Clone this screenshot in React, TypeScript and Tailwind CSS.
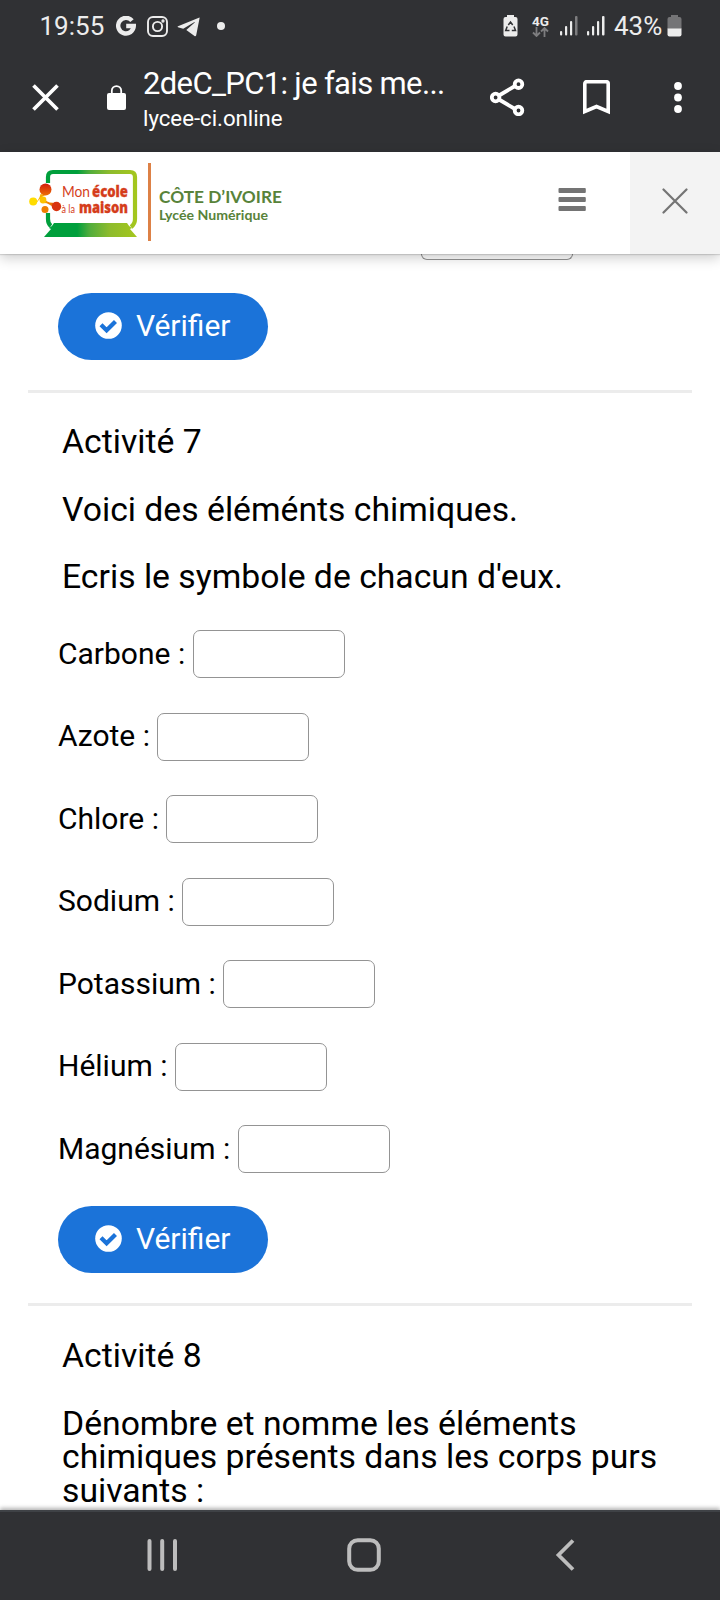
import React from "react";

const elements = [
  { name: "Carbone", label: "w-[135px]" },
  { name: "Azote", label: "w-[99px]" },
  { name: "Chlore", label: "w-[108px]" },
  { name: "Sodium", label: "w-[124px]" },
  { name: "Potassium", label: "w-[165px]" },
  { name: "Hélium", label: "w-[117px]" },
  { name: "Magnésium", label: "w-[180px]" },
];

function StatusBar() {
  return (
    <div className="flex h-[52px] items-center pl-[39.500px] pr-[38px] text-[#ececec]">
      <span className="w-[76.500px] whitespace-nowrap text-[26px] leading-none">19:55</span>
      <svg width="20" height="20" viewBox="0 0 20 20" fill="none" stroke="#ececec" strokeWidth="4.400">
        <path d="M16 4.700A7.800 7.800 0 1 0 17.800 10H10.200" />
      </svg>
      <svg className="ml-[11px]" width="21" height="21" viewBox="0 0 21 21" fill="none" stroke="#ececec" strokeWidth="1.900">
        <rect x="1" y="1" width="19" height="19" rx="5" />
        <circle cx="10.500" cy="10.500" r="4.600" />
        <circle cx="16" cy="5" r="0.700" />
      </svg>
      <svg className="ml-[9px] mt-[2px]" width="23" height="20" viewBox="0 0 23 20" fill="#ececec">
        <path d="M22.500.5 1 9.200Q0 9.800 1 10.200L6.200 11.800 17.500 5Q18.200 4.800 17.700 5.400L9.300 13 17.500 19Q18.700 19.600 19.200 18.200L22.500 1.500Q22.700.3 22.500.5z" />
      </svg>
      <span className="ml-[17px] mt-[-1px] size-2 rounded-full bg-[#ececec]" />
      <div className="ml-auto flex items-center">
        <svg width="15" height="22" viewBox="0 0 15 22">
          <path d="M4 0h7v2h1.500A2 2 0 0 1 14.500 4v15.500a2 2 0 0 1-2 2h-10a2 2 0 0 1-2-2V4a2 2 0 0 1 2-2H4z" fill="#ececec" />
          <path d="M5.300 10 7.500 7l2.200 3M11 11.500l1.500 4H8.800M6.500 15.500H2.700l1.500-4" fill="none" stroke="#303134" strokeWidth="1.500" />
        </svg>
        <div className="ml-[13px] flex w-[19px] flex-col items-center">
          <span className="text-[13.500px] font-bold leading-[12px]">4G</span>
          <svg width="17" height="10" viewBox="0 0 17 10" fill="none" stroke="#7d7d7f" strokeWidth="1.800">
            <path d="M4.500 0v9M1 5.500 4.500 9 8 5.500M12.500 10V1M9 4.500 12.500 1 16 4.500" />
          </svg>
        </div>
        <svg className="ml-[9px]" width="20" height="20" viewBox="0 0 20 20" fill="#ececec">
          <rect x="1" y="15" width="2.200" height="4.500" rx="1" />
          <rect x="6" y="10" width="2.200" height="9.500" rx="1" />
          <rect x="11" y="5" width="2.200" height="14.500" rx="1" />
          <rect x="16" y="0" width="2.500" height="19.500" rx="1" fill="#7d7d7f" />
        </svg>
        <svg className="ml-[7px]" width="20" height="20" viewBox="0 0 20 20" fill="#ececec">
          <rect x="1" y="15" width="2.200" height="4.500" rx="1" />
          <rect x="6" y="10" width="2.200" height="9.500" rx="1" />
          <rect x="11" y="5" width="2.200" height="14.500" rx="1" />
          <rect x="16" y="0" width="2.500" height="19.500" rx="1" />
        </svg>
        <span className="ml-2 w-[53px] whitespace-nowrap text-[26px] leading-none">43%</span>
        <svg width="15" height="22" viewBox="0 0 15 22">
          <path d="M4 0h7v2h1.500A2 2 0 0 1 14.500 4v10H.5V4a2 2 0 0 1 2-2H4z" fill="#747476" />
          <path d="M.5 13.500h14v6a2 2 0 0 1-2 2h-10a2 2 0 0 1-2-2z" fill="#ececec" />
        </svg>
      </div>
    </div>
  );
}

function BrowserBar() {
  return (
    <div className="flex h-[100px] items-start text-white">
      <svg className="ml-8 mt-8" width="27" height="27" viewBox="0 0 27 27" stroke="white" strokeWidth="3.700">
        <path d="M1.500 1.500 25.500 25.500M25.500 1.500 1.500 25.500" />
      </svg>
      <svg className="ml-12 mt-[33px]" width="19" height="25" viewBox="0 0 19 25">
        <path d="M4.800 9V5.800a4.700 4.700 0 0 1 9.400 0V9" fill="none" stroke="white" strokeWidth="1.800" />
        <rect x="0" y="8" width="19" height="17" rx="2" fill="white" />
      </svg>
      <div className="ml-[17px] w-[310px] whitespace-nowrap">
        <div className="mt-[13px] text-[31px] leading-[38px] tracking-[-0.650px]">2deC_PC1: je fais me...</div>
        <div className="mt-px text-[22.200px] leading-[28px]">lycee-ci.online</div>
      </div>
      <svg className="ml-[37px] mt-[26px]" width="36" height="38" viewBox="0 0 36 38" fill="none" stroke="white" strokeWidth="3.800">
        <path d="M9 17.500 25 8M9 21.500l16 9.500" />
        <circle cx="5.600" cy="19.500" r="3.800" />
        <circle cx="28.500" cy="6.200" r="3.800" />
        <circle cx="28.500" cy="32.500" r="3.800" />
      </svg>
      <svg className="ml-[57px] mt-[28px]" width="27" height="35" viewBox="0 0 27 35" fill="none" stroke="white" strokeWidth="3.600">
        <path d="M1.800 31.500V3.700a2 2 0 0 1 2-2h19.400a2 2 0 0 1 2 2v27.800L13.500 26.500z" />
      </svg>
      <svg className="ml-[63.500px] mt-[30px]" width="8" height="31" viewBox="0 0 8 31" fill="white">
        <circle cx="4" cy="4" r="3.900" />
        <circle cx="4" cy="15.500" r="3.900" />
        <circle cx="4" cy="27" r="3.900" />
      </svg>
    </div>
  );
}

function Logo() {
  return (
    <svg width="256" height="80" viewBox="28 162 256 80" role="img">
      <defs>
        <linearGradient id="frame" x1="45" x2="137" y1="0" y2="0" gradientUnits="userSpaceOnUse">
          <stop offset="0.350" stopColor="#009f3c" />
          <stop offset="0.480" stopColor="#4fac3c" />
          <stop offset="0.700" stopColor="#8dbb2d" />
          <stop offset="1" stopColor="#a5c71d" />
        </linearGradient>
        <linearGradient id="ball" x1="0" x2="0" y1="184" y2="196" gradientUnits="userSpaceOnUse">
          <stop offset="0" stopColor="#d4200c" />
          <stop offset="1" stopColor="#ee7203" />
        </linearGradient>
        <linearGradient id="link" x1="31" x2="62" y1="0" y2="0" gradientUnits="userSpaceOnUse">
          <stop offset="0" stopColor="#ffdc00" />
          <stop offset="0.500" stopColor="#f39200" />
          <stop offset="1" stopColor="#d4200c" />
        </linearGradient>
      </defs>
      <path d="M48 183V177q0-5 5-5H130q5 0 5 5V219q0 5-4 8M48 213v6q0 5 3 7" fill="none" stroke="url(#frame)" strokeWidth="4.200" />
      <path d="M49 228q3-1 5-5h73q2 4 5 5l-2 1 7 8H44l7-8z" fill="url(#frame)" />
      <path d="M34 203q5-2 6.500-9l5 1q-5 2-9 8zM43 198q5 6 12 4.500l-1 6q-5-6-11-5.500z" fill="url(#link)" />
      <circle cx="45.500" cy="189.500" r="6" fill="url(#ball)" />
      <circle cx="33.200" cy="201.500" r="4" fill="#ffdc00" />
      <circle cx="43" cy="200" r="3.400" fill="#fdc300" />
      <circle cx="56.500" cy="206.500" r="4.700" fill="#d8320f" />
      <circle cx="45" cy="209.500" r="3.500" fill="#ee7d00" />
      <g fill="#d53d1b">
        <text x="62" y="196.500" fontFamily="Lato, sans-serif" fontSize="14.500" fontWeight="400" textLength="28" lengthAdjust="spacingAndGlyphs">Mon</text>
        <text x="92" y="196.500" fontFamily="Open Sans, sans-serif" fontSize="15" fontWeight="800" stroke="#d53d1b" strokeWidth="0.300" textLength="36" lengthAdjust="spacingAndGlyphs">école</text>
        <text x="61.500" y="212.500" fontFamily="Lato, sans-serif" fontSize="11" fontWeight="400" textLength="13.500" lengthAdjust="spacingAndGlyphs">à la</text>
        <text x="79" y="212.500" fontFamily="Open Sans, sans-serif" fontSize="15" fontWeight="800" stroke="#d53d1b" strokeWidth="0.300" textLength="49" lengthAdjust="spacingAndGlyphs">maison</text>
      </g>
      <rect x="148" y="163" width="3" height="78" fill="#dd8146" />
      <g fill="#58833a" fontFamily="Lato, sans-serif" fontWeight="700">
        <text x="159" y="203" fontSize="17" textLength="123" lengthAdjust="spacingAndGlyphs">CÔTE D’IVOIRE</text>
        <text x="159" y="220" fontSize="12.500" textLength="109" lengthAdjust="spacingAndGlyphs">Lycée Numérique</text>
      </g>
    </svg>
  );
}

function SiteHeader() {
  return (
    <header className="relative z-10 flex h-[102px] bg-white shadow-[0_1px_1px_rgba(0,0,0,0.12),0_4px_12px_rgba(0,0,0,0.2)]">
      <div className="ml-7 mt-2.5">
        <Logo />
      </div>
      <button className="ml-auto mr-[44.500px] flex items-center" aria-label="Menu">
        <svg className="mt-[-6px]" width="28" height="24" viewBox="0 0 28 24" fill="#747474">
          <rect y="0" x="0.500" width="27.300" height="5" rx="1" />
          <rect y="9" x="0.500" width="27.300" height="5" rx="1" />
          <rect y="18" x="0.500" width="27.300" height="5" rx="1" />
        </svg>
      </button>
      <button className="flex w-[90px] items-center justify-center bg-[#f3f3f3]" aria-label="Fermer">
        <svg className="mt-[-5px]" width="26" height="26" viewBox="0 0 26 26" stroke="#747474" strokeWidth="2.200" strokeLinecap="round">
          <path d="M1.500 1.500 24.500 24.500M24.500 1.500 1.500 24.500" />
        </svg>
      </button>
    </header>
  );
}

function VerifyButton() {
  return (
    <button className="ml-[58px] flex h-[67px] w-[210px] items-center rounded-full bg-[#1b73d9] pl-[37px] text-white">
      <svg className="mt-[-2px]" width="27" height="27" viewBox="0 0 27 27">
        <circle cx="13.500" cy="13.500" r="13.300" fill="white" />
        <path d="M6 12.800 11.600 18.200 20.500 9.500" fill="none" stroke="#1b73d9" strokeWidth="4.300" />
      </svg>
      <span className="ml-[14px] mt-[-2px] whitespace-nowrap text-[30px] leading-none">Vérifier</span>
    </button>
  );
}

function NavBar() {
  return (
    <nav className="relative z-10 flex h-[90px] items-start border-t-2 border-[#3f4246] bg-[#303134] shadow-[0_-2px_4px_rgba(0,0,0,0.3)]">
      <svg className="ml-[147px] mt-[27px]" width="31" height="32" viewBox="0 0 31 32" stroke="#bdbdbd" strokeWidth="4" strokeLinecap="round">
        <path d="M2.500 2v28M15.200 2v28M28 2v28" />
      </svg>
      <svg className="ml-[169px] mt-[26px]" width="34" height="34" viewBox="0 0 34 34" fill="none" stroke="#bdbdbd" strokeWidth="4">
        <rect x="2.200" y="2.200" width="29.600" height="29.600" rx="8.500" />
      </svg>
      <svg className="ml-[174px] mt-[27px]" width="20" height="32" viewBox="0 0 20 32" fill="none" stroke="#bdbdbd" strokeWidth="3.800">
        <path d="M18 1.500 3.500 16 18 30.500" />
      </svg>
    </nav>
  );
}

export default function App() {
  return (
    <div className="flex h-[1600px] w-[720px] flex-col overflow-hidden bg-white font-['Roboto',sans-serif] text-black">
      <div className="h-[152px] shrink-0 bg-[#303134]">
        <StatusBar />
        <BrowserBar />
      </div>
      <SiteHeader />
      <main className="h-[1256px] shrink-0 overflow-hidden">
        <div className="ml-[421px] h-[6px] w-[152px] rounded-b-[7px] border border-t-0 border-[#949494]" />
        <div className="mt-[33px]">
          <VerifyButton />
        </div>
        <hr className="mx-7 mt-[30px] border-t-[3px] border-[#ececec]" />
        <div className="ml-[62px] mt-8 text-[33.720px] leading-[33.600px]">
          <h2>Activité 7</h2>
          <p className="mt-[34px]">Voici des éléménts chimiques.</p>
          <p className="mt-[33.500px]">Ecris le symbole de chacun d'eux.</p>
        </div>
        <div className="ml-[58px] mt-[37px] flex flex-col gap-[34.500px]">
          {elements.map((e) => (
            <label key={e.name} className="flex h-12 items-center text-[30px] leading-none">
              <span className={`${e.label} mt-[-1px] shrink-0 whitespace-nowrap`}>{e.name} :</span>
              <input className="h-12 w-[152px] rounded-[7px] border border-[#949494] bg-white" />
            </label>
          ))}
        </div>
        <div className="mt-[33px]">
          <VerifyButton />
        </div>
        <hr className="mx-7 mt-[30px] border-t-[3px] border-[#ececec]" />
        <div className="ml-[62px] mt-[33px] text-[33.720px] leading-[33.400px]">
          <h2>Activité 8</h2>
          <p className="mt-[34.300px] whitespace-nowrap">
            Dénombre et nomme les éléments
            <br />
            chimiques présents dans les corps purs
            <br />
            suivants :
          </p>
        </div>
      </main>
      <NavBar />
    </div>
  );
}
